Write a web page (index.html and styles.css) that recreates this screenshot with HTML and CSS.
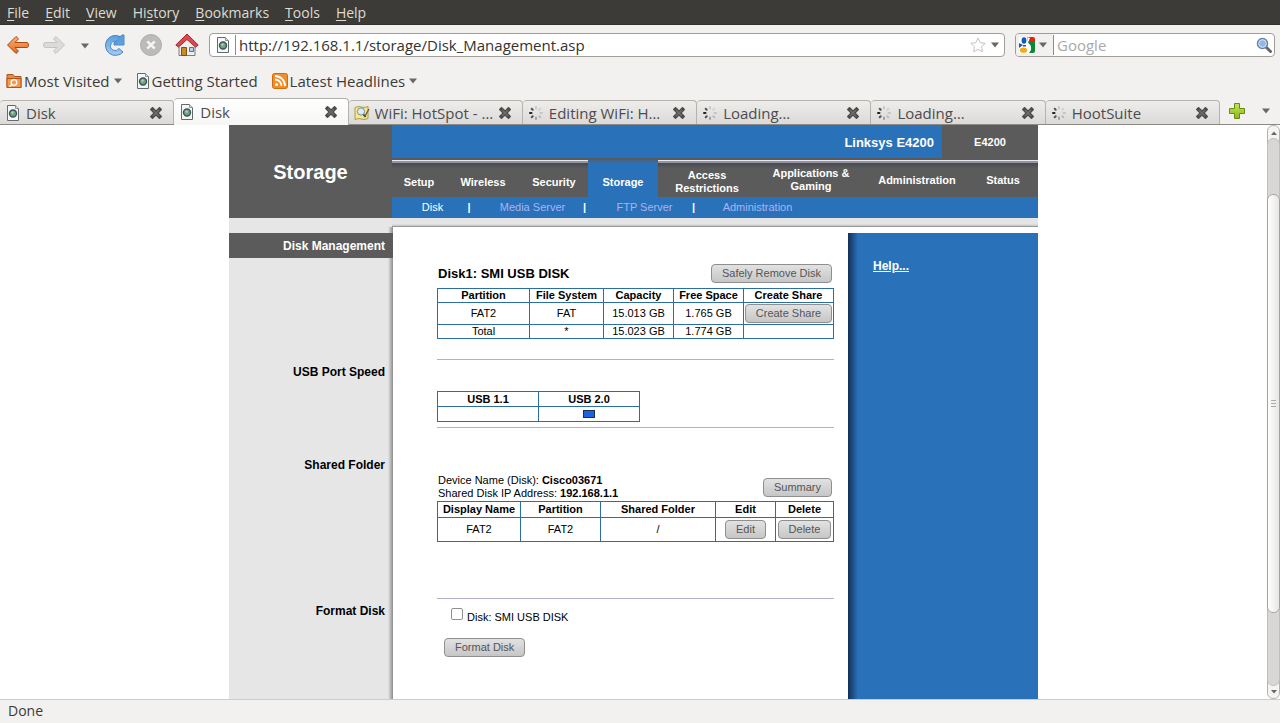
FILE: index.html
```html
<!DOCTYPE html>
<html lang="en">
<head>
<meta charset="utf-8">
<title>Disk</title>
<link rel="stylesheet" href="styles.css">
</head>
<body>
<svg class="defs" aria-hidden="true">
  <defs>
    <linearGradient id="orange" x1="0" y1="0" x2="0" y2="1"><stop offset="0" stop-color="#fbb27c"/><stop offset="1" stop-color="#e4681d"/></linearGradient>
    <linearGradient id="blue" x1="0" y1="0" x2="0" y2="1"><stop offset="0" stop-color="#5b9fdc"/><stop offset="1" stop-color="#a4cdf2"/></linearGradient>
    <linearGradient id="green" x1="0" y1="0" x2="0" y2="1"><stop offset="0" stop-color="#c5e35c"/><stop offset="1" stop-color="#8bb81a"/></linearGradient>
  </defs>
  <symbol id="page" viewBox="0 0 14 16">
    <path d="M1.500.5h8l3 3v12h-11z" fill="#f7f8f5" stroke="#626b6b"/>
    <path d="M9.500.5v3h3" fill="#dfe3e0" stroke="#8b9391"/>
    <circle cx="7" cy="8.500" r="3.500" fill="#71a67a" stroke="#3e5068" stroke-width="1.400"/>
    <path d="M5 7.500l2-1.500 1 2-2 1z" fill="#a9d3ae"/>
  </symbol>
  <symbol id="close" viewBox="0 0 12 12">
    <path d="M2.500 2.500l7 7M9.500 2.500l-7 7" stroke="#4c4c4a" stroke-width="4" stroke-linecap="square"/>
    <path d="M3 3l6 6M9 3l-6 6" stroke="#6d6d69" stroke-width="1.500"/>
  </symbol>
  <symbol id="spin" viewBox="0 0 16 16">
    <g stroke-width="2" stroke-linecap="round">
      <path d="M8 2v1.500" stroke="#c8c8c8"/><path d="M12.300 3.700l-1 1" stroke="#d2d2d2"/><path d="M14 8h-1.500" stroke="#c5c5c5"/><path d="M12.300 12.300l-1-1" stroke="#bcbcbc"/><path d="M8 14v-1.500" stroke="#a0a0a0"/><path d="M3.700 12.300l1-1" stroke="#555"/><path d="M2 8h1.500" stroke="#222"/><path d="M3.700 3.700l1 1" stroke="#555"/>
    </g>
  </symbol>
  <symbol id="down" viewBox="0 0 8 6"><path d="M0 .5h8L4 5.500z" fill="#6b6864"/></symbol>
</svg>

<nav class="menubar">
  <a href="#"><u>F</u>ile</a><a href="#"><u>E</u>dit</a><a href="#"><u>V</u>iew</a><a href="#">Hi<u>s</u>tory</a><a href="#"><u>B</u>ookmarks</a><a href="#"><u>T</u>ools</a><a href="#"><u>H</u>elp</a>
</nav>

<div class="toolbar">
  <div class="buttons">
    <button class="plain" aria-label="Back"><svg width="24" height="24" viewBox="0 0 24 24"><path d="M10 3.500L1.500 12l8.500 8.500 2.500-2.300L9 14.500h12q1.500-.3 1.500-2.500T21 9.500H9l3.500-3.700z" fill="url(#orange)" stroke="#a9480f" stroke-linejoin="round"/></svg></button>
    <button class="plain" aria-label="Forward"><svg width="24" height="24" viewBox="0 0 24 24"><path d="M14 3.500L22.500 12 14 20.500l-2.500-2.300L15 14.500H3Q1.500 14.200 1.500 12T3 9.500h12l-3.500-3.700z" fill="#dcdbd9" stroke="#c5c3c0" stroke-linejoin="round"/></svg></button>
    <button class="plain history" aria-label="Recent pages"><svg width="8" height="6"><use href="#down"/></svg></button>
    <button class="plain" aria-label="Reload"><svg width="24" height="24" viewBox="0 0 24 24"><path d="M15 5.500l4-3.500h2v10h-10V10l3.200-3z" fill="#5b9fdc" stroke="#4a86c4" stroke-linejoin="round"/><path d="M20 19A10 10 0 1 1 17 3.500L13 8.500A4.600 4.600 0 1 0 16 15.500z" fill="url(#blue)" stroke="#4a86c4" stroke-linejoin="round"/><path d="M14 4.500l3.500 1L20.500 2.500V11.500H12l2.500-3z" fill="#5b9fdc"/></svg></button>
    <button class="plain" aria-label="Stop"><svg width="24" height="24" viewBox="0 0 24 24"><circle cx="12" cy="12" r="10.500" fill="#bdbbb9" stroke="#b0aeac"/><path d="M8.300 8.300l7.400 7.400M15.700 8.300l-7.400 7.400" stroke="#f5f5f5" stroke-width="2.500"/></svg></button>
    <button class="plain" aria-label="Home"><svg width="24" height="24" viewBox="0 0 24 24"><path d="M4 12l8-7 8 7v10.500H4z" fill="#eeeeec" stroke="#7d7d7a"/><path d="M12 1L.8 12l2.700 2L12 6.500l8.500 7.500 2.700-2z" fill="#d84a50" stroke="#a6262c" stroke-linejoin="round"/><path d="M6.500 14.500h5v8h-5z" fill="#c98b28" stroke="#805310"/><path d="M14.500 14.500h4v4h-4z" fill="#b9d3ec" stroke="#59708a"/></svg></button>
  </div>
  <div class="field url">
    <svg width="14" height="16"><use href="#page"/></svg>
    <span class="bar"></span>
    <input type="text" aria-label="Location" value="http://192.168.1.1/storage/Disk_Management.asp">
    <svg width="16" height="16" viewBox="0 0 16 16"><path d="M8 1l2.200 4.700 5 .6-3.700 3.500 1 5L8 12.400l-4.500 2.400 1-5L.8 6.300l5-.6z" fill="#fff" stroke="#c4c4c4"/></svg>
    <svg width="8" height="6"><use href="#down"/></svg>
  </div>
  <div class="field search">
    <button class="engine" aria-label="Search engine"><svg width="16" height="16" viewBox="0 0 16 16"><rect width="16" height="16" rx="2" fill="#fff"/><path d="M8 0h6q2 0 2 2v3H8z" fill="#e42316"/><path d="M9 5h7v9q0 2-2 2H9z" fill="#0a8a35"/><path d="M8.500 0L11 1 9 5.500 12 9v4l-2 3H7z" fill="#fff"/><ellipse cx="5" cy="3.500" rx="2.400" ry="3.200" fill="#1859b5"/><path d="M0 6l4 2-4 3z" fill="#1859b5"/><path d="M4 8h3v1.500H4z" fill="#1859b5"/><ellipse cx="4.500" cy="13.200" rx="3.600" ry="2.600" fill="#efae12"/></svg>
    <svg width="8" height="6"><use href="#down"/></svg></button>
    <span class="bar"></span>
    <input type="text" aria-label="Search" placeholder="Google">
    <svg width="16" height="16" viewBox="0 0 16 16"><path d="M10.500 10.500l4 4" stroke="#666" stroke-width="3" stroke-linecap="round"/><circle cx="6.500" cy="6.500" r="5" fill="#8db8e8" stroke="#6b7f9a" stroke-width="1.500"/><circle cx="6.500" cy="6.500" r="3.800" fill="none" stroke="#d7e8f8"/></svg>
  </div>
</div>

<div class="bookmarks">
  <a href="#"><svg width="16" height="16" viewBox="0 0 16 16"><path d="M1 1.500h6l1.500 2H15v11H1z" fill="#e98a3c" stroke="#b3541a"/><path d="M1 5.500h14v9H1z" fill="#f09a50" stroke="#b3541a"/><circle cx="8" cy="9.500" r="2.800" fill="none" stroke="#fff" stroke-width="1.300"/><path d="M6 11.500l-2.500 2" stroke="#fff" stroke-width="1.500"/></svg>Most Visited<svg class="drop" width="8" height="6"><use href="#down"/></svg></a>
  <a href="#"><svg width="14" height="16"><use href="#page"/></svg>Getting Started</a>
  <a href="#"><svg width="16" height="16" viewBox="0 0 16 16"><rect x=".5" y=".5" width="15" height="15" rx="2" fill="#f38d27" stroke="#d06c10"/><circle cx="4.500" cy="11.500" r="1.500" fill="#fff"/><path d="M3 6.500A6.500 6.500 0 0 1 9.500 13M3 3a10 10 0 0 1 10 10" fill="none" stroke="#fff" stroke-width="1.800"/></svg>Latest Headlines<svg class="drop" width="8" height="6"><use href="#down"/></svg></a>
</div>

<div class="tabs">
  <div class="tab"><svg width="14" height="16"><use href="#page"/></svg><span>Disk</span><button class="plain" aria-label="Close tab"><svg width="12" height="12"><use href="#close"/></svg></button></div>
  <div class="tab current"><svg width="14" height="16"><use href="#page"/></svg><span>Disk</span><button class="plain" aria-label="Close tab"><svg width="12" height="12"><use href="#close"/></svg></button></div>
  <div class="tab"><svg width="16" height="16" viewBox="0 0 16 16"><path d="M1 2.500l4-1 5 1 4-1v12l-4 1-5-1-4 1z" fill="#f5e98c" stroke="#a99d45"/><circle cx="7" cy="6.500" r="3.600" fill="#d8edf8" stroke="#7d8c94"/><path d="M9.500 9.500l2 2.500" stroke="#444" stroke-width="2"/><path d="M11 11l4-7" stroke="#6b6440" stroke-width="1.500"/></svg><span>WiFi: HotSpot - …</span><button class="plain" aria-label="Close tab"><svg width="12" height="12"><use href="#close"/></svg></button></div>
  <div class="tab"><svg width="16" height="16"><use href="#spin"/></svg><span>Editing WiFi: H…</span><button class="plain" aria-label="Close tab"><svg width="12" height="12"><use href="#close"/></svg></button></div>
  <div class="tab"><svg width="16" height="16"><use href="#spin"/></svg><span>Loading…</span><button class="plain" aria-label="Close tab"><svg width="12" height="12"><use href="#close"/></svg></button></div>
  <div class="tab"><svg width="16" height="16"><use href="#spin"/></svg><span>Loading…</span><button class="plain" aria-label="Close tab"><svg width="12" height="12"><use href="#close"/></svg></button></div>
  <div class="tab"><svg width="16" height="16"><use href="#spin"/></svg><span>HootSuite</span><button class="plain" aria-label="Close tab"><svg width="12" height="12"><use href="#close"/></svg></button></div>
  <div class="tab-tools">
    <button class="plain" aria-label="New tab"><svg width="16" height="16" viewBox="0 0 16 16"><path d="M5.500.5h5v5h5v5h-5v5h-5v-5h-5v-5h5z" fill="url(#green)" stroke="#668c16"/></svg></button>
    <button class="plain" aria-label="List tabs"><svg width="8" height="6"><use href="#down"/></svg></button>
  </div>
</div>

<div class="viewport">
  <main class="canvas">
    <div class="router">
      <header class="head">
        <h1>Storage</h1>
        <div class="head-right">
          <div class="brand"><span class="product">Linksys E4200</span><span class="model">E4200</span></div>
          <nav class="mainnav">
            <a href="#">Setup</a><a href="#">Wireless</a><a href="#">Security</a><a class="on" href="#">Storage</a><a href="#">Access Restrictions</a><a class="high" href="#">Applications &amp; Gaming</a><a class="high" href="#">Administration</a><a class="high" href="#">Status</a>
          </nav>
          <nav class="subnav">
            <a class="on" href="#">Disk</a><b>|</b><a href="#">Media Server</a><b>|</b><a href="#">FTP Server</a><b>|</b><a href="#">Administration</a>
          </nav>
        </div>
      </header>
      <div class="strip"><div></div><div class="edge"></div></div>
      <div class="content">
        <div class="side first"><h2>Disk Management</h2></div>
        <section class="disk">
          <div class="row title"><h3>Disk1: SMI USB DISK</h3><button class="btn">Safely Remove Disk</button></div>
          <table class="parts">
            <colgroup><col class="w92"><col class="w74"><col class="w70"><col class="w70"><col class="w90"></colgroup>
            <tr><th>Partition</th><th>File System</th><th>Capacity</th><th>Free Space</th><th>Create Share</th></tr>
            <tr class="tall"><td>FAT2</td><td>FAT</td><td>15.013 GB</td><td>1.765 GB</td><td><button class="btn">Create Share</button></td></tr>
            <tr><td>Total</td><td>*</td><td>15.023 GB</td><td>1.774 GB</td><td></td></tr>
          </table>
          <hr>
        </section>
        <div class="side"><h4>USB Port Speed</h4></div>
        <section class="speed">
          <table class="usb">
            <tr><th>USB 1.1</th><th>USB 2.0</th></tr>
            <tr><td></td><td><span class="lamp"></span></td></tr>
          </table>
          <hr>
        </section>
        <div class="side"><h4>Shared Folder</h4></div>
        <section class="shared">
          <div class="row"><p>Device Name (Disk): <b>Cisco03671</b><br>Shared Disk IP Address: <b>192.168.1.1</b></p><button class="btn">Summary</button></div>
          <table class="shares">
            <colgroup><col class="w83"><col class="w80"><col class="w115"><col class="w60"><col class="w58"></colgroup>
            <tr><th>Display Name</th><th>Partition</th><th>Shared Folder</th><th>Edit</th><th>Delete</th></tr>
            <tr class="tall"><td>FAT2</td><td>FAT2</td><td>/</td><td><button class="btn">Edit</button></td><td><button class="btn">Delete</button></td></tr>
          </table>
          <hr>
        </section>
        <div class="side"><h4>Format Disk</h4></div>
        <section class="format">
          <div class="pick"><input type="checkbox" id="fmt"><label for="fmt">Disk: SMI USB DISK</label></div>
          <button class="btn">Format Disk</button>
        </section>
        <aside class="help"><a href="#">Help...</a></aside>
      </div>
    </div>
  </main>
  <div class="scroll">
    <button class="plain" aria-label="Scroll up"><svg width="8" height="6" viewBox="0 0 8 6"><path d="M1 5h6L4 1.500z" fill="#6b6864"/></svg></button>
    <div class="track"><div class="thumb"><i></i><i></i><i></i></div></div>
    <button class="plain" aria-label="Scroll down"><svg width="8" height="6" viewBox="0 0 8 6"><path d="M1 1h6L4 4.500z" fill="#6b6864"/></svg></button>
  </div>
</div>
<footer class="status">Done</footer>
</body>
</html>
```
FILE: styles.css
```css
* { box-sizing: border-box; }
body {
  margin: 0;
  height: 100vh;
  display: flex;
  flex-direction: column;
  overflow: hidden;
  background: #f2f1f0;
  color: #3c3b37;
  font: 15px/20px "Open Sans", "Noto Sans", sans-serif;
}
.defs { position: absolute; width: 0; height: 0; }
svg { flex: none; display: block; }
a { color: inherit; text-decoration: none; }
.plain {
  display: grid;
  place-items: center;
  padding: 0;
  border: 0;
  background: none;
}

.menubar {
  display: flex;
  gap: 16px;
  height: 25px;
  padding: 2px 7px;
  background: #3c3b37;
  color: #dfdbd2;
  border-bottom: 1px solid #32312e;
  font-size: 14px;
  line-height: 21px;
}
.menubar u { text-underline-offset: 2px; }

.toolbar {
  display: flex;
  align-items: center;
  gap: 10px;
  height: 40px;
  padding: 0 5px 0 6px;
}
.buttons { display: flex; gap: 12px; width: 193px; }
.buttons .history { width: 12px; padding-top: 2px; margin: 0 1px; }
.field {
  display: flex;
  align-items: center;
  gap: 5px;
  height: 24px;
  padding: 0 5px 0 6px;
  background: #fff;
  border: 1px solid #a19e9a;
  border-radius: 4px;
}
.field input {
  flex: 1;
  min-width: 0;
  padding: 0;
  border: 0;
  outline: 0;
  background: none;
  color: #333;
  font: inherit;
}
.field input::placeholder { color: #aaa; }
.url { flex: 1; }
.search { width: 260px; padding: 0 2px 0 0; }
.bar { width: 1px; height: 20px; background: #8e8b87; }
.url .bar { margin-right: -2px; }
.search .bar { margin: 0 -2px 0 -5px; }
.engine {
  display: flex;
  align-items: center;
  gap: 4px;
  height: 22px;
  padding: 0 6px 0 3px;
  border: 0;
  border-radius: 3px 0 0 3px;
  background: #f2f1f0;
}

.bookmarks { display: flex; gap: 14px; height: 33px; padding: 0 6px 1px; }
.bookmarks a { display: flex; align-items: center; gap: 2px; }
.drop { margin: 0 0 0 2px; }

.tabs {
  display: flex;
  align-items: flex-end;
  height: 27px;
  border-bottom: 1px solid #8d8a86;
}
.tab {
  display: flex;
  align-items: center;
  flex: 1;
  gap: 5px;
  min-width: 0;
  height: 24px;
  padding: 0 11px 0 5px;
  border: 1px solid #b5b2ae;
  border-width: 1px 1px 0 0;
  border-radius: 4px 4px 0 0;
  background: linear-gradient(#eeedeb, #dcdad8);
  color: #4c4c4c;
}
.tab > svg { width: 16px; }
.tab span { flex: 1; min-width: 0; white-space: nowrap; overflow: hidden; }
.tab.current {
  height: 27px;
  margin-bottom: -1px;
  background: linear-gradient(#fff, #f6f6f5);
}
.tab-tools {
  display: flex;
  align-items: center;
  justify-content: space-between;
  width: 60px;
  height: 26px;
  padding: 0 10px 0 9px;
}

.viewport { flex: 1; display: flex; min-height: 0; background: #fff; }
.canvas {
  flex: 1;
  display: flex;
  justify-content: center;
  overflow: hidden;
  font: 11px/13px "Liberation Sans", Arial, sans-serif;
  color: #000;
}
.router { display: flex; flex-direction: column; width: 809px; max-width: 100%; }

.head { display: flex; flex: none; background: #5b5b5b; color: #fff; }
.head h1 {
  display: grid;
  place-items: center;
  width: 163px;
  margin: 0;
  font-size: 20px;
  line-height: 24px;
}
.head-right { flex: 1; }
.brand { display: flex; height: 33px; font-weight: bold; line-height: 35px; }
.product {
  flex: 1;
  padding-right: 8px;
  background: #2971b9;
  text-align: right;
  font-size: 13px;
}
.model { width: 96px; text-align: center; }
.mainnav {
  display: grid;
  grid-template-columns: 54fr 74fr 68fr 70fr 98fr 110fr 102fr 70fr;
  height: 39px;
  font-weight: bold;
  text-align: center;
}
.mainnav a {
  display: grid;
  place-items: center;
  margin-top: 2px;
  padding: 7px 8px 0;
  background: linear-gradient(#e8e8ee 0 1px, #9494a2 1px 3px, #444850 3px, #5b5b5b 8px);
}
.mainnav .high { padding-top: 3px; }
.mainnav .on { background: linear-gradient(#4a6484, #2971b9 4px); }
.subnav {
  display: grid;
  grid-template-columns: 70px 14px 102px 13px 96px 13px 104px;
  justify-content: start;
  height: 21px;
  background: #2971b9;
  color: #a9b4f0;
  line-height: 21px;
  text-align: center;
}
.subnav a { padding-left: 11px; white-space: nowrap; }
.subnav b { color: #fff; }
.subnav .on { color: #fff; }
.strip { display: flex; flex: none; height: 9px; background: #e6e6e6; }
.strip div { width: 163px; }
.strip .edge {
  flex: 1;
  background: linear-gradient(#e4e4e4 6px, #c4c4c4 8px, #999 8px);
}

.content {
  flex: 1;
  display: grid;
  grid-template-columns: 164px 1fr 190px;
  grid-template-rows: auto auto auto 1fr;
}
.side {
  grid-column: 1;
  padding: 6px 8px 0 0;
  background: linear-gradient(to left, #8c8c8c, #e6e6e6 5px);
  text-align: right;
}
.side.first { padding-right: 0; }
.side h2 {
  margin: 0;
  padding: 1px 8px 0 0;
  background: #5b5b5b;
  color: #fff;
  font-size: 12px;
  line-height: 24px;
}
.side h4 { margin: 0; font-size: 12px; line-height: 13px; }
section { grid-column: 2; padding: 0 14px 0 44px; }
.help {
  grid-column: 3;
  grid-row: 1 / -1;
  margin-top: 6px;
  padding: 26px 25px;
  background: linear-gradient(to right, #12305a, #2971b9 10px);
  color: #fff;
  font-size: 12px;
  font-weight: bold;
  line-height: 14px;
}
.help a { text-decoration: underline; }

.row { display: flex; justify-content: space-between; align-items: center; padding: 0 2px 0 1px; }
.row p, .row h3 { margin: 0; }
.row h3 { font-size: 13px; line-height: 19px; }
.btn {
  height: 19px;
  padding: 0 10px;
  border: 1px solid #8f8f8f;
  border-radius: 4px;
  background: linear-gradient(#e2e2e2, #c6c6c6);
  color: #555;
  font: inherit;
  white-space: nowrap;
}
hr { margin: 0; border: 0; border-top: 1px solid #b1b1cc; }
table { width: 100%; border-collapse: collapse; table-layout: fixed; text-align: center; }
th, td { padding: 0; border: 1px solid #2b6ea5; white-space: nowrap; }
td .btn { display: block; margin: 0 auto; }
.w92 { width: 92px; } .w74 { width: 74px; } .w70 { width: 70px; } .w90 { width: 90px; }
.w83 { width: 83px; } .w80 { width: 80px; } .w115 { width: 115px; } .w60 { width: 60px; } .w58 { width: 58px; }

.disk { padding-top: 37px; }
.disk .title { margin-bottom: 5px; }
.parts tr { height: 14px; }
.parts .tall { height: 22px; }
.parts { margin-bottom: 20px; }
.speed { padding-top: 31px; padding-bottom: 25px; }
.usb { width: 203px; margin-bottom: 5px; }
.usb tr { height: 15px; }
.lamp {
  display: block;
  width: 12px;
  height: 8px;
  margin: 0 auto;
  border: 1px solid #15324a;
  background: #1c62e0;
}
.shared { padding-top: 21px; }
.shared .row { margin-bottom: 1px; }
.shares tr { height: 16px; }
.shares .tall { height: 24px; }
.shares { margin-bottom: 56px; }
.format { padding-top: 9px; }
.pick { display: flex; gap: 4px; padding-left: 14px; margin-bottom: 14px; }
.pick input {
  appearance: none;
  width: 12px;
  height: 12px;
  margin: 0;
  border: 1px solid #8f8f8f;
  border-radius: 2px;
  background: #fff;
}
.pick label { padding-top: 3px; }
.format .btn { margin-left: 7px; }

.scroll {
  display: flex;
  flex-direction: column;
  width: 13px;
  border: 1px solid #b5b2ae;
  border-radius: 6px;
  background: #f5f4f3;
}
.scroll .plain { height: 13px; }
.track {
  flex: 1;
  padding-top: 56px;
  border-radius: 6px;
  background: #d9d7d5;
  box-shadow: 0 0 0 1px #c0bdba;
}
.thumb {
  display: flex;
  flex-direction: column;
  align-items: center;
  justify-content: center;
  gap: 2px;
  height: 85%;
  max-height: 417px;
  border-radius: 6px;
  background: linear-gradient(to right, #fff, #e8e6e4);
  box-shadow: 0 0 0 1px #a5a29e;
}
.thumb i { width: 5px; height: 1px; background: #aaa; }
.status { height: 24px; padding: 1px 8px; border-top: 1px solid #cfccc8; font-size: 14px; }
```
